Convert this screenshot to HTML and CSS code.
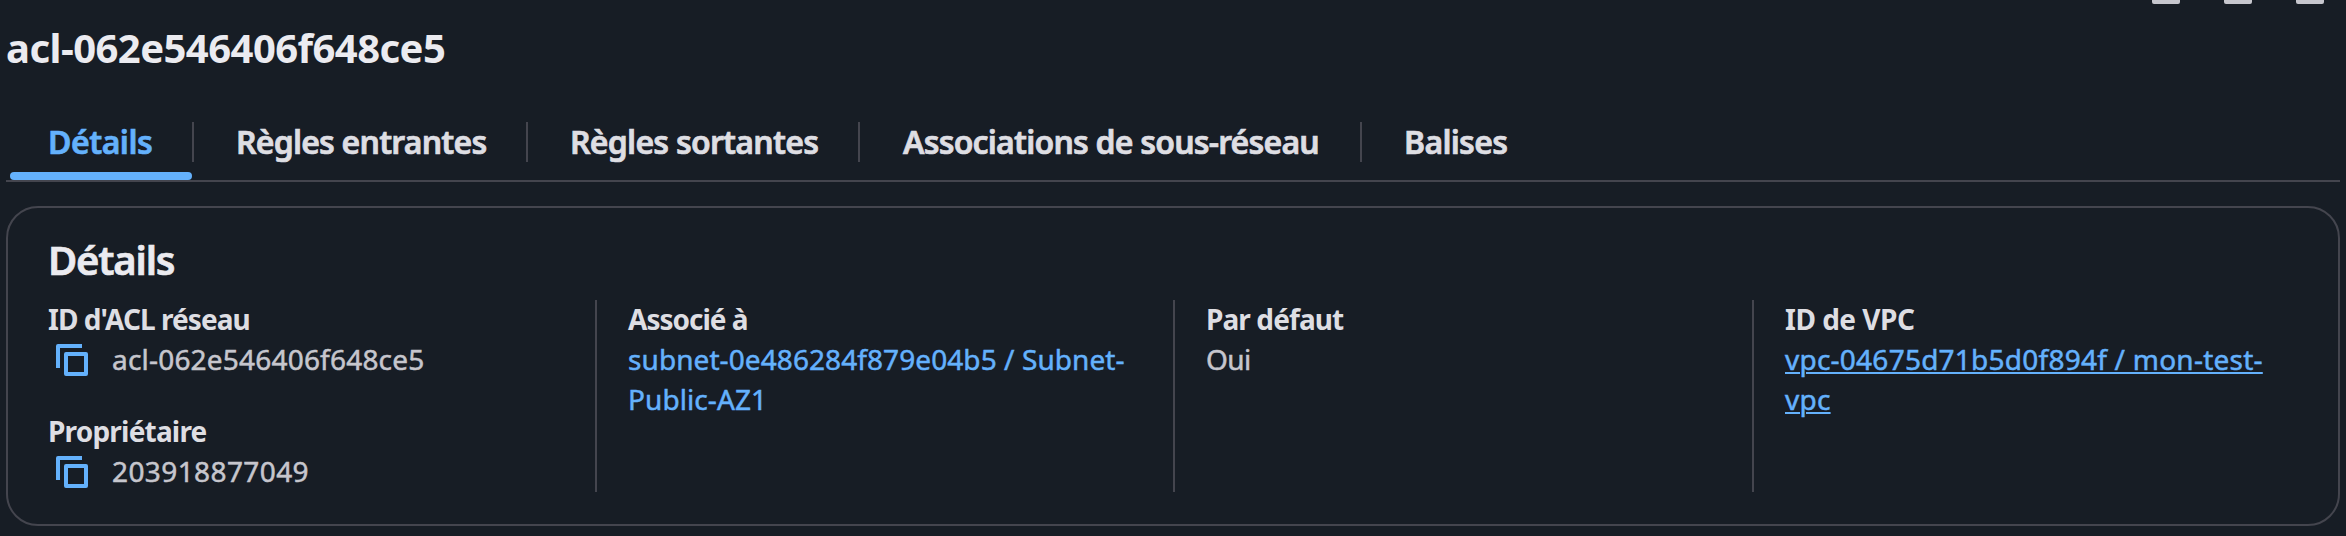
FILE: index.html
```
<!DOCTYPE html>
<html lang="fr">
<head>
<meta charset="utf-8">
<title>acl-062e546406f648ce5</title>
<link rel="stylesheet" href="styles.css">
</head>
<body>
<header class="header">
  <h1 class="title">acl-062e546406f648ce5</h1>
  <div class="handles"><i class="handle"></i><i class="handle"></i><i class="handle"></i></div>
</header>
<nav class="tabs">
  <a class="tab tab-details">Détails</a>
  <a class="tab tab-inbound">Règles entrantes</a>
  <a class="tab tab-outbound">Règles sortantes</a>
  <a class="tab tab-subnets">Associations de sous-réseau</a>
  <a class="tab tab-tags">Balises</a>
</nav>
<section class="panel">
  <h2 class="panel-title">Détails</h2>
  <div class="columns">
    <div class="column">
      <div class="field">
        <div class="label label-acl">ID d'ACL réseau</div>
        <div class="value copyable">
          <svg class="copy" viewBox="0 0 32 32"><path d="M2 24V2h24M10 10h20v20H10z"/></svg>
          <span class="value-acl">acl-062e546406f648ce5</span>
        </div>
      </div>
      <div class="field">
        <div class="label label-owner">Propriétaire</div>
        <div class="value copyable">
          <svg class="copy" viewBox="0 0 32 32"><path d="M2 24V2h24M10 10h20v20H10z"/></svg>
          <span class="value-owner">203918877049</span>
        </div>
      </div>
    </div>
    <div class="column">
      <div class="label label-linked">Associé à</div>
      <div class="value"><a class="link link-subnet">subnet-0e486284f879e04b5 / Subnet-<br>Public-AZ1</a></div>
    </div>
    <div class="column">
      <div class="label label-default">Par défaut</div>
      <div class="value value-default">Oui</div>
    </div>
    <div class="column">
      <div class="label label-vpc">ID de VPC</div>
      <div class="value"><a class="link link-vpc">vpc-04675d71b5d0f894f / mon-test-<br>vpc</a></div>
    </div>
  </div>
</section>
</body>
</html>
```
FILE: styles.css
```
* { box-sizing: border-box; }

body {
  margin: 0;
  height: 536px;
  overflow: hidden;
  padding: 0 6px;
  background: #171d25;
  color: #c6c6cd;
  font-family: "Noto Sans", "Open Sans", sans-serif;
}

.header {
  display: flex;
  justify-content: space-between;
  height: 122px;
}

.title {
  margin: 24px 0 0;
  font-size: 40px;
  line-height: 48px;
  font-weight: 700;
  letter-spacing: -0.54px;
  color: #ebebf0;
}

.handles {
  display: flex;
  gap: 44px;
  padding-right: 16px;
}

.handle {
  width: 28px;
  height: 4px;
  background: #c6c6cd;
  border-radius: 0 0 2px 2px;
}

.tabs {
  display: flex;
  height: 60px;
  padding-left: 2px;
  border-bottom: 2px solid #44454e;
}

.tab {
  position: relative;
  height: 40px;
  padding-left: 42px;
  border-right: 2px solid #44454e;
  font-size: 32px;
  line-height: 39px;
  font-weight: 600;
  color: #dedee3;
  white-space: nowrap;
  -webkit-text-stroke: 0.7px;
}

.tab-details {
  width: 186px;
  padding-left: 40px;
  letter-spacing: -0.5px;
  color: #64b1fc;
}

.tab-details::after {
  content: "";
  position: absolute;
  left: 2px;
  right: 0;
  top: 50px;
  height: 8px;
  border-radius: 4px;
  background: #64b1fc;
}

.tab-inbound { width: 334px; letter-spacing: -0.8px; }
.tab-outbound { width: 332px; letter-spacing: -0.75px; }
.tab-subnets { width: 502px; padding-left: 43px; letter-spacing: -0.8px; }
.tab-tags { letter-spacing: -0.7px; border-right: 0; }

.panel {
  height: 320px;
  margin-top: 24px;
  padding: 28px 40px 0;
  border: 2px solid #44454e;
  border-radius: 32px;
}

.panel-title {
  margin: 0;
  font-size: 40px;
  line-height: 48px;
  font-weight: 600;
  letter-spacing: -1.2px;
  color: #ebebf0;
  -webkit-text-stroke: 0.7px;
}

.columns {
  display: grid;
  grid-template-columns: 547px 578px 579px 1fr;
  height: 192px;
  margin-top: 16px;
}

.column {
  display: flow-root;
}

.column > :first-child { margin-top: -1px; }

.column + .column {
  padding-left: 31px;
  border-left: 2px solid #44454e;
}

.field + .field { margin-top: 32px; }

.label {
  font-size: 28px;
  line-height: 40px;
  font-weight: 700;
  color: #dedee3;
}

.label-acl { letter-spacing: -0.95px; }
.label-owner { letter-spacing: -0.8px; }
.label-linked { letter-spacing: -1px; }
.label-default { letter-spacing: -0.9px; }
.label-vpc { letter-spacing: -0.5px; }

.value {
  font-size: 28px;
  line-height: 40px;
  -webkit-text-stroke: 0.5px;
}

.copyable {
  display: flex;
  align-items: center;
  gap: 24px;
  padding-left: 8px;
}

.copy {
  width: 32px;
  height: 32px;
  margin-top: 2px;
  fill: none;
  stroke: #64b1fc;
  stroke-width: 4;
  stroke-linejoin: round;
}

.value-acl { letter-spacing: 0.2px; }
.value-owner { letter-spacing: 0.4px; }
.value-default { letter-spacing: -0.6px; }
.link { color: #64b1fc; }
.link-subnet { letter-spacing: 0.08px; }

.link-vpc {
  letter-spacing: 0.24px;
  text-decoration: underline 2px;
  text-underline-offset: 2px;
}
```
